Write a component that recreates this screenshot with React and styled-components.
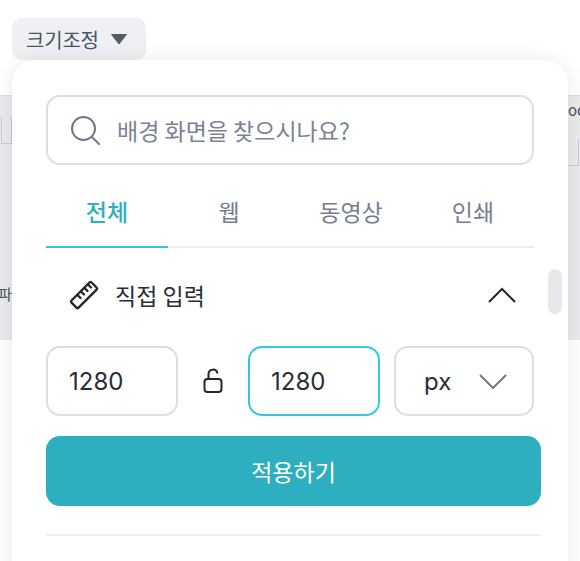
import React from 'react';
import styled, { createGlobalStyle } from 'styled-components';

const GlobalStyle = createGlobalStyle`
  html, body {
    margin: 0;
    padding: 0;
    background: #fff;
  }
  * {
    box-sizing: border-box;
  }
`;

const FONT = `"Noto Sans CJK KR", "Noto Sans", sans-serif`;

const Page = styled.div`
  position: relative;
  width: 580px;
  height: 561px;
  overflow: hidden;
  background: #fff;
  font-family: ${FONT};
`;

const TopBar = styled.div`
  height: 95px;
  padding: 18px 0 0 12px;
`;

const Trigger = styled.button`
  display: flex;
  align-items: center;
  gap: 11px;
  width: 134px;
  height: 42px;
  padding: 0 0 0 14px;
  border: 0;
  border-radius: 10px;
  background: #eef0f3;
  color: #4b5261;
  font-family: ${FONT};
  font-size: 20px;
  letter-spacing: -0.2px;
`;

const Band = styled.div`
  display: flex;
  justify-content: space-between;
  height: 245px;
  border-top: 1px solid #dfe1e6;
  background: #e9ebee;
`;

const BandEdge = styled.div`
  width: 12px;
  display: flex;
  flex-direction: column;
  align-items: ${(p) => (p.$right ? 'flex-start' : 'flex-end')};
  overflow: hidden;
`;

const BandBox = styled.div`
  width: 11px;
  height: 27px;
  margin-top: 21px;
  border: 1px solid #c9ccd6;
  ${(p) => (p.$right ? 'border-left: 0;' : 'border-right: 1px solid #c2c5d0;')}
  border-top: 0;
`;

const BandText = styled.span`
  margin-top: ${(p) => p.$top}px;
  color: #4b5261;
  font-size: 15px;
  line-height: 16px;
  white-space: nowrap;
`;

const Panel = styled.div`
  position: absolute;
  left: 12px;
  top: 60px;
  width: 556px;
  height: 540px;
  padding: 35px 27px 0 34px;
  border-radius: 24px 24px 0 0;
  background: #fff;
  box-shadow: 0 0 18px rgba(30, 35, 50, 0.1);
`;

const Search = styled.div`
  display: flex;
  align-items: center;
  gap: 17px;
  width: 488px;
  height: 70px;
  padding-left: 22px;
  border: 2px solid #dcdee5;
  border-radius: 14px;
  color: #7a8196;
  font-size: 23px;
`;

const Tabs = styled.div`
  display: grid;
  grid-template-columns: repeat(4, 122px);
  width: 488px;
  border-bottom: 2px solid #eceef1;
`;

const Tab = styled.div`
  height: 83px;
  margin-bottom: -2px;
  padding-top: 30px;
  border-bottom: 2px solid ${(p) => (p.$active ? '#35c8dc' : 'transparent')};
  color: ${(p) => (p.$active ? '#2eb0c0' : '#767d92')};
  font-size: 23px;
  font-weight: ${(p) => (p.$active ? 500 : 400)};
  line-height: 32px;
  text-align: center;
`;

const SectionHead = styled.div`
  display: flex;
  align-items: center;
  width: 488px;
  height: 98px;
  padding: 0 18px 4px 22px;
  color: #2a2d34;
  font-size: 23px;
`;

const SectionTitle = styled.span`
  flex: 1;
  margin-left: 15px;
`;

const SizeRow = styled.div`
  display: flex;
  align-items: center;
  width: 488px;
  height: 70px;
`;

const Field = styled.div`
  display: flex;
  align-items: center;
  width: ${(p) => p.$w}px;
  height: 70px;
  padding-left: ${(p) => p.$pad}px;
  border: 2px solid ${(p) => (p.$focus ? '#35c8dc' : '#dcdee5')};
  border-radius: 14px;
  color: #2a2d34;
  font-family: "Inter", "Noto Sans", sans-serif;
  font-size: 24px;
`;

const LockSlot = styled.div`
  display: flex;
  justify-content: center;
  width: 70px;
`;

const Gap = styled.div`
  width: 14px;
`;

const Unit = styled.span`
  flex: 1;
`;

const ApplyButton = styled.button`
  display: block;
  width: 495px;
  height: 70px;
  margin-top: 20px;
  border: 0;
  border-radius: 14px;
  background: #2eafbf;
  color: #fff;
  font-family: ${FONT};
  font-size: 23px;
`;

const Divider = styled.div`
  width: 495px;
  height: 2px;
  margin-top: 28px;
  background: #eceef1;
`;

const ScrollThumb = styled.div`
  position: absolute;
  left: 536px;
  top: 209px;
  width: 14px;
  height: 45px;
  border-radius: 7px;
  background: #e6e8ec;
`;

function App() {
  return (
    <Page>
      <GlobalStyle />
      <TopBar>
        <Trigger>
          크기조정
          <svg width="18" height="12" viewBox="0 0 18 12">
            <path d="M1.5 1.5h15L9 11z" fill="#545b6b" stroke="#545b6b" strokeLinejoin="round" />
          </svg>
        </Trigger>
      </TopBar>
      <Band>
        <BandEdge>
          <BandBox />
          <BandText $top={142}>파</BandText>
        </BandEdge>
        <BandEdge $right>
          <BandText $top={6}>oc</BandText>
          <BandBox $right />
        </BandEdge>
      </Band>
      <Panel>
        <Search>
          <svg width="30" height="30" viewBox="0 0 30 30" fill="none" stroke="#6f7790" strokeWidth="2">
            <circle cx="13.5" cy="13.5" r="11.5" />
            <path d="M22 22l7 7" strokeLinecap="round" />
          </svg>
          배경 화면을 찾으시나요?
        </Search>
        <Tabs>
          <Tab $active>전체</Tab>
          <Tab>웹</Tab>
          <Tab>동영상</Tab>
          <Tab>인쇄</Tab>
        </Tabs>
        <SectionHead>
          <svg width="32" height="32" viewBox="0 0 32 32" fill="none" stroke="#24272e" strokeWidth="2.4" strokeLinejoin="round" strokeLinecap="round">
            <path d="M3.5 21.5L21.5 3.5a1.5 1.5 0 0 1 2.1 0l5 5a1.5 1.5 0 0 1 0 2.1L10.6 28.6a1.5 1.5 0 0 1-2.1 0l-5-5a1.5 1.5 0 0 1 0-2.1z" />
            <path d="M9.5 16l3 3M13 12.5l3 3M16.5 9l3 3M20 5.5l3 3" />
          </svg>
          <SectionTitle>직접 입력</SectionTitle>
          <svg width="28" height="16" viewBox="0 0 28 16" fill="none" stroke="#24272e" strokeWidth="2">
            <path d="M1 15L14 2l13 13" />
          </svg>
        </SectionHead>
        <SizeRow>
          <Field $w={132} $pad={21}>1280</Field>
          <LockSlot>
            <svg width="20" height="26" viewBox="0 0 20 26" fill="none" stroke="#24272e" strokeWidth="2">
              <rect x="1.5" y="11" width="17" height="13" rx="3" />
              <path d="M5.5 11V6a4.5 4.5 0 0 1 8.8-1.2" strokeLinecap="round" />
            </svg>
          </LockSlot>
          <Field $w={132} $pad={21} $focus>1280</Field>
          <Gap />
          <Field $w={140} $pad={28}>
            <Unit>px</Unit>
            <svg width="28" height="16" viewBox="0 0 28 16" fill="none" stroke="#6f7790" strokeWidth="2" style={{ marginRight: 25 }}>
              <path d="M1 2l13 13L27 2" />
            </svg>
          </Field>
        </SizeRow>
        <ApplyButton>적용하기</ApplyButton>
        <Divider />
        <ScrollThumb />
      </Panel>
    </Page>
  );
}

export default App;
